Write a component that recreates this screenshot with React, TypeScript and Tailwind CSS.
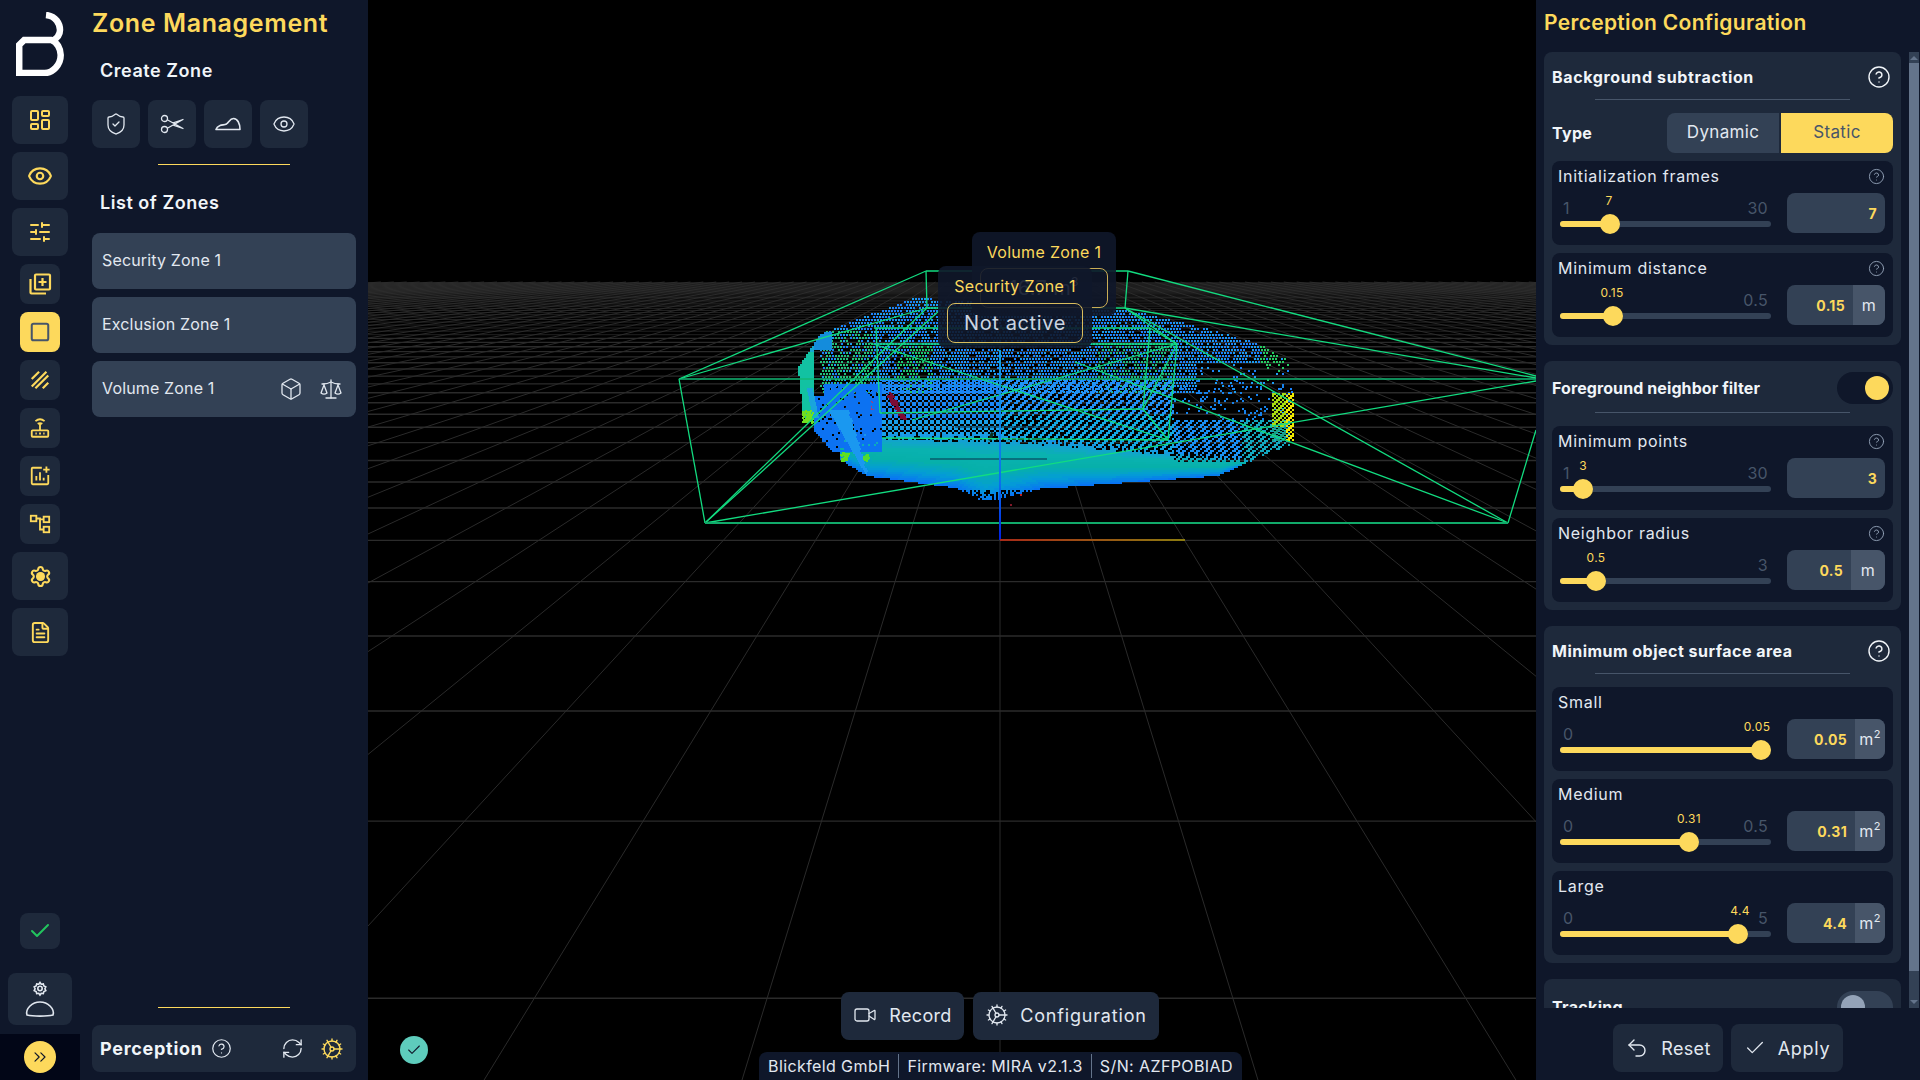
import { useMemo } from 'react'
import {
  Box, Check, ChevronsRight, CircleHelp, Cog, Eye, FileText, LayoutDashboard,
  RefreshCw, Scale, Settings, ShieldCheck, SlidersHorizontal, Square, Undo2, Video,
} from 'lucide-react'

type Pt = [number, number]

function makeRng(seed: number) {
  let a = seed
  return () => {
    a = (a + 0x6d2b79f5) | 0
    let t = Math.imul(a ^ (a >>> 15), 1 | a)
    t = (t + Math.imul(t ^ (t >>> 7), 61 | t)) ^ t
    return ((t ^ (t >>> 14)) >>> 0) / 4294967296
  }
}

const HULL: Pt[] = [
  [797, 367], [803, 420], [841, 460], [866, 475], [955, 487], [984, 502], [1039, 488], [1217, 475],
  [1266, 453], [1293, 442], [1294, 393], [1287, 360], [1258, 343], [1203, 327], [1123, 308],
  [912, 297], [858, 318], [820, 333],
]
const LOWER: Pt[] = HULL.slice(0, 11)

function inside(x: number, y: number) {
  let hit = false
  for (let i = 0, j = HULL.length - 1; i < HULL.length; j = i++) {
    const [xi, yi] = HULL[i]
    const [xj, yj] = HULL[j]
    if (yi > y !== yj > y && x < ((xj - xi) * (y - yi)) / (yj - yi) + xi) hit = !hit
  }
  return hit
}

function bottomY(x: number) {
  for (let i = 0; i < LOWER.length - 1; i++) {
    const [x0, y0] = LOWER[i]
    const [x1, y1] = LOWER[i + 1]
    if (x >= x0 && x <= x1) return y0 + ((y1 - y0) * (x - x0)) / Math.max(1, x1 - x0)
  }
  return 440
}

// blue, teal, cyan, blue from the top of the floor to its front edge
const RAMP: [number, [number, number, number]][] = [
  [0, [24, 150, 230]],
  [0.3, [10, 178, 176]],
  [0.55, [6, 176, 170]],
  [0.78, [4, 158, 212]],
  [1, [8, 116, 244]],
]

function ramp(t: number) {
  const q = Math.round(Math.min(1, Math.max(0, t)) * 20) / 20
  for (let i = 0; i < RAMP.length - 1; i++) {
    const [a, ca] = RAMP[i]
    const [b, cb] = RAMP[i + 1]
    if (q >= a && q <= b) {
      const k = (q - a) / (b - a)
      return `rgb(${ca.map((v, j) => Math.round(v + (cb[j] - v) * k)).join(',')})`
    }
  }
  return 'rgb(8,116,244)'
}

function buildCloud() {
  const rnd = makeRng(42)
  const buckets = new Map<string, string[]>()
  const add = (x: number, y: number, c: string, s = 2) => {
    if (!buckets.has(c)) buckets.set(c, [])
    buckets.get(c)!.push(`M${Math.round(x)} ${Math.round(y)}h${s}v${s}h-${s}z`)
  }
  const floorTop = (x: number) => (x < 1000 ? 434 : 434 + (x - 1000) * 0.1)

  // back wall, sparse dots
  for (let y = 298; y < 392; y += 3) {
    for (let x = 820; x < 1295; x += 3) {
      const xx = x + (y % 6 === 4 ? 1.5 : 0)
      if (!inside(xx, y) || rnd() > 0.84) continue
      if (xx > 1195 && y > 362 && rnd() > 0.25) continue
      let c = rnd() > 0.45 ? '#1c82fa' : '#1c9cf2'
      const mix = rnd()
      if (xx > 896 && xx < 932 && y > 345 && mix > 0.25) c = '#1cc470'
      if (xx > 1096 && xx < 1172 && y > 340 && mix > 0.5) c = '#1cb884'
      if (xx > 1258 && y < 382 && mix > 0.2) c = '#26cc62'
      if (xx < 872 && y > 330 && mix > 0.35) c = '#22c07c'
      add(xx, y, c)
    }
  }
  // middle band, dotted on the left, diagonal rows on the right
  for (let y = 380; y < 470; y += 2) {
    for (let x = 880; x < 1290; x += 2) {
      if (y > floorTop(x) || !inside(x, y)) continue
      if (x < 1000) {
        if ((Math.floor(x / 3) + Math.floor(y / 3)) % 2 === 0) add(x, y, y > 418 ? '#1aa0ea' : '#1a86f4')
      } else if (x > 1172) {
        if (y > 418) {
          if ((x + y * 1.2) % 7 < 3.4) add(x, y, x > 1240 ? '#14a8c0' : '#1a90f4')
        } else if (rnd() < 0.09) add(x, y, '#1682ec')
      } else if ((x + y * 1.2) % 8 < 3.6 && rnd() > 0.05) {
        add(x, y, y > 412 ? '#14a8e4' : '#2292f6')
      }
    }
  }
  // floor, dense gradient
  for (let y = 430; y < 506; y += 2) {
    for (let x = 840; x < 1295; x += 2) {
      const top = floorTop(x)
      if (y < top || !inside(x, y)) continue
      const t = (y - top) / Math.max(8, bottomY(x) - top)
      if (x > 1172 && y < 462 && (x + y * 1.2) % 7 < 2.4) continue
      if (y > 488 && rnd() > 0.55) continue
      if (t < 0.12 && rnd() > 0.55) continue
      add(x, y, ramp(t))
    }
  }
  // left block: teal strip, green checker, solid blue, wedge
  for (let y = 332; y < 462; y += 2) {
    for (let x = 796; x < 882; x += 2) {
      if (!inside(x, y)) continue
      if (x < 814 && y < 418) add(x, y, y < 352 ? '#14a8d0' : '#12c2a2')
      else if (x < 832 && y < 350) add(x, y, '#148cdc')
      else if (y >= 384 && y < 452 && x >= 814 && rnd() > 0.06) {
        if (!(x < 824 && y < 396)) add(x, y, '#0c72f2')
      }
    }
  }
  for (let y = 388; y < 418; y += 2) {
    for (let x = 807 + (y - 388) * 0.2; x < 813 + (y - 388) * 0.2; x += 2) add(x, y, '#1aa4dc')
  }
  for (let y = 410; y < 474; y += 2) {
    const l = 829 + (y - 410) * 0.58
    const r = 848 + (y - 410) * 0.3
    for (let x = l; x < r; x += 2) add(x, y, '#1a98f0')
  }
  // yellow and green spots
  for (let y = 393; y < 440; y += 2) {
    for (let x = 1272; x < 1294; x += 2) {
      if ((x + y) % 5 > 2) continue
      add(x, y, x > 1284 ? '#f0e800' : y > 425 ? '#18a080' : '#a8dc10')
    }
  }
  for (let i = 0; i < 70; i++) add(802 + rnd() * 10, 410 + rnd() * 12, '#70e020')
  for (let i = 0; i < 40; i++) add(840 + rnd() * 8, 452 + rnd() * 8, '#60e020')
  for (let i = 0; i < 24; i++) add(862 + rnd() * 6, 454 + rnd() * 6, '#50dc30')
  // dark red pillar
  for (let i = 0; i < 120; i++) {
    const t = rnd()
    add(886 + t * 14 + rnd() * 5, 392 + t * 24 + rnd() * 3, '#7c0c34')
  }
  for (let i = 0; i < 8; i++) add(868 + rnd() * 6, 400 + rnd() * 10, '#e02850', 1)
  add(1020, 494, '#c02020')
  add(1010, 504, '#801828')
  return [...buckets.entries()].map(([color, parts]) => ({ color, d: parts.join('') }))
}

const WIRES: [number, number, number, number][] = [
  [679, 379, 705, 523], [1536, 430, 1508, 523], [926, 271, 1128, 271], [926, 271, 927, 308], [1128, 271, 1125, 308],
  [927, 308, 1125, 308], [679, 379, 926, 271], [1536, 376, 1128, 271], [679, 379, 927, 308], [1536, 378, 1125, 308],
  [705, 523, 927, 308], [705, 523, 940, 310], [1508, 523, 1125, 308], [1508, 523, 1075, 362], [705, 523, 1536, 381],
  [874, 328, 1150, 328], [876, 328, 880, 413], [880, 413, 1143, 409], [1143, 409, 1150, 328], [1177, 344, 1168, 440],
  [878, 344, 1177, 344], [1150, 328, 1177, 344], [1143, 409, 1168, 440], [882, 438, 1168, 440], [1177, 344, 912, 420],
  [870, 343, 1168, 440], [1143, 409, 1177, 344], [1125, 308, 1177, 344],
]

function Scene() {
  const cloud = useMemo(buildCloud, [])
  const grid = useMemo(() => {
    let near = ''
    let far = ''
    let v = ''
    for (let n = -1; n < 57; n++) {
      const y = 240 + 1 / (0.001319 + 0.000402 * n)
      if (y < 282) continue
      if (y > 335) near += `M368 ${y.toFixed(1)}H1536`
      else far += `M368 ${y.toFixed(1)}H1536`
    }
    for (let i = -90; i <= 90; i++) {
      const top = 1000 + i * 0.3071 * 42
      const bottom = 1000 + i * 0.3071 * 840
      v += `M${top.toFixed(1)} 282L${bottom.toFixed(1)} 1080`
    }
    return { near, far, v }
  }, [])
  return (
    <svg className="absolute inset-0 h-full w-full" viewBox="368 0 1168 1080">
      <defs>
        <linearGradient id="axisX" x1="0" x2="1" y1="0" y2="0">
          <stop offset="0" stopColor="#a82a18" />
          <stop offset="1" stopColor="#8c7c10" />
        </linearGradient>
        <linearGradient id="axisY" x1="0" x2="0" y1="0" y2="1">
          <stop offset="0" stopColor="#14a0e0" />
          <stop offset="0.7" stopColor="#0a70ee" />
          <stop offset="1" stopColor="#0020e0" />
        </linearGradient>
      </defs>
      <path d={grid.v} stroke="#2a2a2a" strokeWidth="1" fill="none" />
      <path d={grid.far} stroke="#2e2e2e" strokeWidth="0.7" fill="none" />
      <path d={grid.near} stroke="#2b2b2b" strokeWidth="1.4" fill="none" />
      {cloud.map((c) => (
        <path key={c.color} d={c.d} fill={c.color} shapeRendering="crispEdges" />
      ))}
      <path d="M955 427H1047M930 459H1047" stroke="#06304a" strokeWidth="1.2" />
      <path d="M988 440l3-8 3 1-3 8z" fill="#0a3020" />
      {WIRES.map(([x1, y1, x2, y2], i) => (
        <line key={i} x1={x1} y1={y1} x2={x2} y2={y2} stroke="#12dc80" strokeWidth="1.3" />
      ))}
      <line x1="679" y1="379" x2="1536" y2="379" stroke="#12b874" strokeWidth="1.6" />
      <line x1="705" y1="523" x2="1508" y2="523" stroke="#11aa6a" strokeWidth="2" />
      <rect x="999" y="350" width="2" height="190" fill="url(#axisY)" />
      <rect x="1000" y="539" width="185" height="2" fill="url(#axisX)" />
    </svg>
  )
}

function Logo() {
  return (
    <svg viewBox="0 0 48 64" className="h-[64px] w-[48px]" fill="none" stroke="#fff" strokeWidth="6.500">
      <path d="M3.200 61V33l5-5h27c6 2 9.500 9 9.500 15 0 10-8 18-16 18z" strokeLinejoin="miter" />
      <path d="M30 3c10 1 14 9 14 15 0 6-4 9-8 11" />
    </svg>
  )
}

function Stripes() {
  return (
    <svg viewBox="0 0 24 24" className="h-[22px] w-[22px]" fill="none" stroke="#fdd95c" strokeWidth="2.400">
      <path d="M3 11 11 3M3 19 19 3M7 21 21 7M15 21l6-6" />
    </svg>
  )
}

function LibraryIcon() {
  return (
    <svg viewBox="0 0 24 24" className="h-[24px] w-[24px]" fill="none" stroke="#fdd95c" strokeWidth="2.200">
      <rect x="7" y="2.500" width="15" height="15" rx="1" />
      <path d="M14.500 6v8M10.500 10h8M2.500 7v13.500a1 1 0 0 0 1 1H18" />
    </svg>
  )
}

function RouterIcon() {
  return (
    <svg viewBox="0 0 24 24" className="h-[22px] w-[22px]" fill="none" stroke="#fdd95c" strokeWidth="2">
      <rect x="3" y="14.500" width="18" height="7" rx="1" />
      <path d="M12 14.500V7.500M7 4.500c3-2.500 7-2.500 10 0M9.500 7.500c1.500-1 3.500-1 5 0M7 18h1.500M11 18h2M15.500 18H17" />
    </svg>
  )
}

function StatsIcon() {
  return (
    <svg viewBox="0 0 24 24" className="h-[22px] w-[22px]" fill="none" stroke="#fdd95c" strokeWidth="2">
      <path d="M14 3H4a1 1 0 0 0-1 1v16a1 1 0 0 0 1 1h16a1 1 0 0 0 1-1V11" />
      <path d="M8 17v-5M12 17V8M16 17v-3M19 1.500v7M15.500 5h7" />
    </svg>
  )
}

function SchemaIcon() {
  return (
    <svg viewBox="0 0 24 24" className="h-[22px] w-[22px]" fill="none" stroke="#fdd95c" strokeWidth="2">
      <rect x="2" y="3" width="6" height="6" />
      <rect x="16" y="4" width="6" height="6" />
      <rect x="16" y="15" width="6" height="6" />
      <path d="M8 6h4v12h4M12 7h4" />
    </svg>
  )
}

function CogSolid() {
  return (
    <span className="relative flex h-[24px] w-[24px] items-center justify-center">
      <Settings size={23} color="#fdd95c" strokeWidth={2.2} />
      <span className="absolute h-[9px] w-[9px] rounded-full bg-[#fdd95c]" />
    </span>
  )
}

function UserCog() {
  return (
    <svg viewBox="0 0 32 36" className="h-[36px] w-[32px]" fill="none" stroke="#e2e8f0" strokeWidth="1.600">
      <path d="M3 34c-2-6 5-13 13-13s15 7 13 13c-6 1.500-20 1.500-26 0z" />
      <circle cx="16" cy="7.500" r="2.200" />
      <path d="M16 1.500l1.200 1.700 2.100-.3.600 2 1.900 1-.9 1.800.9 1.900-1.900 1-.6 2-2.100-.3-1.200 1.700-1.200-1.700-2.100.3-.6-2-1.900-1 .9-1.900-.9-1.800 1.900-1 .6-2 2.100.3z" />
    </svg>
  )
}

function ScissorsIcon() {
  return (
    <svg viewBox="0 0 24 20" className="h-[20px] w-[24px]" fill="none" stroke="#e2e8f0" strokeWidth="1.300">
      <circle cx="4.500" cy="4.500" r="3" />
      <circle cx="4.500" cy="15.500" r="3" />
      <path d="M7.300 5.800 23 14.500 12.500 10.800M7.300 14.200 23 5.500 12.500 9.200" strokeLinejoin="round" />
    </svg>
  )
}

function DuneIcon() {
  return (
    <svg viewBox="0 0 26 14" className="h-[14px] w-[26px]" fill="none" stroke="#e2e8f0" strokeWidth="1.600">
      <path d="M1 12.500h24c0-6-2.500-11-6.500-11-3.500 0-4.500 3.500-7 5.500-2 1.200-4.500.5-6.500 1.500-2 .8-3.500 2-4 4z" strokeLinejoin="round" />
    </svg>
  )
}

function RailButton({ wide, h, active, children }: { wide?: boolean; h: string; active?: boolean; children: React.ReactNode }) {
  return (
    <div className={`flex items-center justify-center rounded-lg ${wide ? 'w-[56px]' : 'w-[40px]'} ${h} ${active ? 'bg-[#fdd95c]' : 'bg-[#1e293b]'}`}>
      {children}
    </div>
  )
}

function ZoneRow({ name, tools }: { name: string; tools?: boolean }) {
  return (
    <div className="flex h-[56px] items-center justify-between rounded-lg bg-[#334155] pl-[10px] pr-[13px]">
      <span className="pb-[2px] text-[16px] tracking-[0.01em] text-[#e2e8f0]">{name}</span>
      {tools && (
        <span className="flex items-center gap-[16px]">
          <Box size={24} strokeWidth={1.3} color="#e2e8f0" />
          <Scale size={24} strokeWidth={1.3} color="#e2e8f0" />
        </span>
      )}
    </div>
  )
}

type SliderProps = {
  label: string
  min: string
  max: string
  value: string
  thumb: number
  tip: number
  unit?: string
  unitW?: string
  help?: boolean
}

function SliderRow({ label, min, max, value, thumb, tip, unit, unitW, help = true }: SliderProps) {
  return (
    <div className="h-[84px] rounded-lg bg-[#0f172a] px-2">
      <div className="flex h-[32px] items-center justify-between pb-[2px]">
        <span className="-ml-0.5 text-[16px] tracking-[0.045em] text-[#e2e8f0]">{label}</span>
        {help && <CircleHelp size={17} strokeWidth={1.3} color="#94a3b8" />}
      </div>
      <div className="flex gap-4">
        <div className="relative h-[40px] w-[211px]">
          <span className="absolute left-[3px] top-[5px] text-[16px] leading-[20px] text-[#475569]">{min}</span>
          <span className="absolute right-[3px] top-[5px] text-[16px] leading-[20px] text-[#475569]">{max}</span>
          <span
            className="absolute top-0 -translate-x-1/2 text-[12px] leading-[16px] text-[#fdd95c]"
            style={{ left: tip }}
          >
            {value}
          </span>
          <div className="absolute left-0 right-0 top-[28px] h-[6px] overflow-hidden rounded-full bg-[#334155]">
            <div className="h-full bg-[#fdd95c]" style={{ width: thumb }} />
          </div>
          <div className="absolute top-[21px] h-[20px] w-[20px] -translate-x-1/2 rounded-full bg-[#fdd95c]" style={{ left: thumb }} />
        </div>
        <div className="flex h-[40px] w-[98px] overflow-hidden rounded-lg bg-[#334155]">
          <span className="flex-1 self-center pr-2 text-right text-[14px] font-bold text-[#fdd95c]">{value}</span>
          {unit && (
            <span className={`flex items-center justify-center bg-[#475569] text-[16px] text-[#e2e8f0] ${unitW}`}>
              m{unit === 'm2' && <sup className="text-[11px]">2</sup>}
            </span>
          )}
        </div>
      </div>
    </div>
  )
}

function CardHeader({ title, toggle, size = 'h-[48px]', track = 'tracking-[0.03em]' }: { title: string; toggle?: boolean; size?: string; track?: string }) {
  return (
    <div className={`relative flex items-center justify-between pl-2 pr-2 pt-[2px] ${size}`}>
      <span className={`text-[16px] font-bold text-[#f1f5f9] ${track}`}>{title}</span>
      {toggle ? (
        <span className="flex h-[32px] w-[56px] items-center justify-end rounded-full bg-[#0f172a] px-1">
          <span className="h-[24px] w-[24px] rounded-full bg-[#fdd95c]" />
        </span>
      ) : (
        <CircleHelp size={24} strokeWidth={1.4} color="#f1f5f9" className="mr-[2px]" />
      )}
      <span className="absolute bottom-0 left-[51px] h-px w-[255px] bg-[#475569]" />
    </div>
  )
}

function RightPanel() {
  return (
    <aside className="flex w-[384px] flex-col bg-[#0f172a]">
      <h2 className="flex h-[44px] shrink-0 items-center pl-2 pt-[1px] text-[21px] font-semibold text-[#fdd95c]">Perception Configuration</h2>
      <div className="flex min-h-0 flex-1 overflow-hidden pl-2">
        <div className="flex w-[357px] shrink-0 flex-col gap-4 pt-2">
          <section className="flex h-[293px] shrink-0 flex-col rounded-lg bg-[#1e293b]">
            <CardHeader title="Background subtraction" track="tracking-[0.04em]" />
            <div className="flex h-[61px] items-center justify-between pl-2 pr-2 pt-[5px]">
              <span className="text-[16px] font-bold text-[#f1f5f9]">Type</span>
              <div className="flex h-[40px] w-[226px] gap-[2px]">
                <span className="flex flex-1 items-center justify-center rounded-l-lg bg-[#334155] text-[17px] text-[#e2e8f0]">Dynamic</span>
                <span className="flex flex-1 items-center justify-center rounded-r-lg bg-[#fdd95c] text-[17px] text-[#475569]">Static</span>
              </div>
            </div>
            <div className="flex flex-col gap-2 px-2">
              <SliderRow label="Initialization frames" min="1" max="30" value="7" thumb={50} tip={49} />
              <SliderRow label="Minimum distance" min="" max="0.5" value="0.15" thumb={53} tip={52} unit="m" unitW="w-[32px]" />
            </div>
          </section>
          <section className="flex h-[249px] shrink-0 flex-col rounded-lg bg-[#1e293b]">
            <CardHeader title="Foreground neighbor filter" toggle size="h-[52px]" track="tracking-[0.006em]" />
            <div className="flex flex-col gap-2 px-2 pt-[13px]">
              <SliderRow label="Minimum points" min="1" max="30" value="3" thumb={23} tip={23} />
              <SliderRow label="Neighbor radius" min="" max="3" value="0.5" thumb={36} tip={36} unit="m" unitW="w-[34px]" />
            </div>
          </section>
          <section className="flex h-[337px] shrink-0 flex-col rounded-lg bg-[#1e293b]">
            <CardHeader title="Minimum object surface area" />
            <div className="flex flex-col gap-2 px-2 pt-[13px]">
              <SliderRow label="Small" min="0" max="" value="0.05" thumb={201} tip={197} unit="m2" unitW="w-[30px]" help={false} />
              <SliderRow label="Medium" min="0" max="0.5" value="0.31" thumb={129} tip={129} unit="m2" unitW="w-[30px]" help={false} />
              <SliderRow label="Large" min="0" max="5" value="4.4" thumb={178} tip={180} unit="m2" unitW="w-[30px]" help={false} />
            </div>
          </section>
          <section className="shrink-0 rounded-t-lg bg-[#1e293b]">
            <div className="flex h-[56px] items-center justify-between pl-2 pr-2">
              <span className="text-[16px] font-bold text-[#f1f5f9]">Tracking</span>
              <span className="flex h-[32px] w-[56px] items-center rounded-full bg-[#334155] px-1">
                <span className="h-[24px] w-[24px] rounded-full bg-[#94a3b8]" />
              </span>
            </div>
          </section>
        </div>
        <div className="ml-2 mt-2 flex h-[956px] w-[10px] flex-col items-center bg-[#334155]">
          <div className="flex h-[11px] w-full shrink-0 items-center justify-center">
            <span className="h-0 w-0 border-x-[4px] border-b-[4px] border-x-transparent border-b-[#64748b]" />
          </div>
          <div className="h-[908px] w-full shrink-0 bg-[#64748b]" />
          <div className="flex flex-1 w-full items-end justify-center pb-[4px]">
            <span className="h-0 w-0 border-x-[4px] border-t-[4px] border-x-transparent border-t-[#64748b]" />
          </div>
        </div>
      </div>
      <div className="flex h-[72px] shrink-0 items-start gap-2 pl-[77px] pt-4">
        <button className="flex h-[48px] w-[110px] items-center justify-center gap-3 rounded-lg bg-[#1e293b] text-[18px] text-[#e2e8f0]">
          <Undo2 size={24} strokeWidth={1.4} />
          Reset
        </button>
        <button className="flex h-[48px] w-[112px] items-center justify-center gap-3 rounded-lg bg-[#1e293b] text-[18px] tracking-[0.04em] text-[#e2e8f0]">
          <Check size={22} strokeWidth={1.4} />
          Apply
        </button>
      </div>
    </aside>
  )
}

function LeftPanel() {
  return (
    <aside className="flex w-[288px] flex-col bg-[#0f172a] pl-3 pr-3">
      <h1 className="flex h-[48px] shrink-0 items-center text-[25px] font-semibold tracking-[0.025em] text-[#fdd95c]">Zone Management</h1>
      <h3 className="flex h-[44px] shrink-0 items-center pl-2 text-[18px] font-semibold tracking-[0.03em] text-[#f1f5f9]">Create Zone</h3>
      <div className="mt-[8px] flex gap-2">
        {[<ShieldCheck key="s" size={24} strokeWidth={1.3} color="#e2e8f0" />, <ScissorsIcon key="c" />, <DuneIcon key="d" />, <Eye key="e" size={24} strokeWidth={1.3} color="#e2e8f0" />].map((icon, i) => (
          <div key={i} className="flex h-[48px] w-[48px] items-center justify-center rounded-lg bg-[#1e293b]">{icon}</div>
        ))}
      </div>
      <div className="mx-auto mt-4 h-px w-[132px] bg-[#fdd95c]" />
      <h3 className="flex h-[68px] shrink-0 items-center pl-2 pt-[6px] text-[18px] font-semibold tracking-[0.03em] text-[#f1f5f9]">List of Zones</h3>
      <div className="flex flex-col gap-2">
        <ZoneRow name="Security Zone 1" />
        <ZoneRow name="Exclusion Zone 1" />
        <ZoneRow name="Volume Zone 1" tools />
      </div>
      <div className="mt-auto mx-auto h-px w-[132px] bg-[#fdd95c]" />
      <div className="mb-2 mt-[17px] flex h-[47px] items-center rounded-lg bg-[#1e293b] pl-2 pr-[12px]">
        <span className="text-[18px] font-bold tracking-[0.04em] text-[#f1f5f9]">Perception</span>
        <CircleHelp size={21} strokeWidth={1.4} color="#e2e8f0" className="ml-2" />
        <RefreshCw size={23} strokeWidth={1.4} color="#e2e8f0" className="ml-auto" />
        <Cog size={24} strokeWidth={1.4} color="#fdd95c" className="ml-4" />
      </div>
    </aside>
  )
}

function Rail() {
  const y = '#fdd95c'
  return (
    <nav className="flex w-[80px] shrink-0 flex-col items-center bg-[#0f172a]">
      <div className="flex h-[96px] items-start justify-center pt-[12px]"><Logo /></div>
      <div className="flex flex-col items-center gap-2">
        <RailButton wide h="h-[48px]"><LayoutDashboard size={24} color={y} strokeWidth={2} /></RailButton>
        <RailButton wide h="h-[48px]"><Eye size={26} color={y} strokeWidth={2} /></RailButton>
        <RailButton wide h="h-[48px]"><SlidersHorizontal size={24} color={y} strokeWidth={2} /></RailButton>
        <RailButton h="h-[40px]"><LibraryIcon /></RailButton>
        <RailButton h="h-[40px]" active><Square size={22} color="#475569" strokeWidth={2.2} /></RailButton>
        <RailButton h="h-[40px]"><Stripes /></RailButton>
        <RailButton h="h-[40px]"><RouterIcon /></RailButton>
        <RailButton h="h-[40px]"><StatsIcon /></RailButton>
        <RailButton h="h-[40px]"><SchemaIcon /></RailButton>
        <RailButton wide h="h-[48px]"><CogSolid /></RailButton>
        <RailButton wide h="h-[48px]"><FileText size={23} color={y} strokeWidth={2} /></RailButton>
      </div>
      <div className="mt-auto"><RailButton h="h-[36px]"><Check size={24} color="#22c55e" strokeWidth={2} /></RailButton></div>
      <div className="mt-6 flex h-[52px] w-[64px] items-center justify-center rounded-lg bg-[#1e293b]"><UserCog /></div>
      <div className="mt-[9px] flex h-[46px] w-full items-center justify-center bg-[#020617]">
        <span className="flex h-[32px] w-[32px] items-center justify-center rounded-full bg-[#fdd95c]">
          <ChevronsRight size={20} strokeWidth={1.4} color="#0f172a" />
        </span>
      </div>
    </nav>
  )
}

function Viewport() {
  return (
    <main className="relative min-w-0 flex-1 overflow-hidden bg-black">
      <Scene />
      <div className="absolute left-[604px] top-[232px] h-[84px] w-[144px] rounded-lg bg-[#0f172a]/90 px-[8px] pt-[8px]">
        <p className="text-center text-[16px] leading-[24px] text-[#fdd95c]">Volume Zone 1</p>
        <div className="mt-[4px] flex h-[40px] items-center justify-center rounded-lg border border-[#c9ad55] text-[20px] text-[#cbd5e1]">
          16.7 m<sup className="text-[12px]">3</sup>
        </div>
      </div>
      <div className="absolute left-[570px] top-[266px] h-[82px] w-[154px] rounded-lg bg-[#0f172a]/90 px-[9px] pt-[8px]">
        <p className="text-center text-[16px] leading-[24px] text-[#fdd95c]">Security Zone 1</p>
        <div className="mt-[5px] flex h-[40px] items-center justify-center rounded-lg border border-[#d9bc5c] text-[20px] tracking-[0.03em] text-[#cbd5e1]">
          Not active
        </div>
      </div>
      <div className="absolute left-[32px] top-[1036px] flex h-[28px] w-[28px] items-center justify-center rounded-full bg-[#5eccbc]">
        <Check size={16} strokeWidth={1.6} color="#0f172a" />
      </div>
      <div className="absolute left-[473px] top-[992px] flex gap-[9px] text-[18px] text-[#e2e8f0]">
        <button className="flex h-[48px] w-[123px] items-center justify-center gap-3 rounded-lg bg-[#1e293b] pb-[2px]">
          <Video size={24} strokeWidth={1.3} />
          Record
        </button>
        <button className="flex h-[48px] w-[186px] items-center justify-center gap-[11px] rounded-lg bg-[#1e293b] pb-[2px] tracking-[0.045em]">
          <Cog size={24} strokeWidth={1.3} />
          Configuration
        </button>
      </div>
      <div className="absolute bottom-0 left-[391px] flex h-[28px] w-[483px] items-center justify-center rounded-t-lg bg-[#0f172a] text-[16px] tracking-[0.025em] text-[#e2e8f0]">
        <span className="px-[8px]">Blickfeld GmbH</span>
        <span className="h-[24px] w-px bg-[#64748b]" />
        <span className="px-[8px]">Firmware: MIRA v2.1.3</span>
        <span className="h-[24px] w-px bg-[#64748b]" />
        <span className="px-[8px]">S/N: AZFPOBIAD</span>
      </div>
    </main>
  )
}

export default function App() {
  return (
    <div className="flex h-screen w-[1920px] overflow-hidden bg-black font-['Inter','Noto_Sans',sans-serif] tracking-[0.02em]">
      <Rail />
      <LeftPanel />
      <Viewport />
      <RightPanel />
    </div>
  )
}
